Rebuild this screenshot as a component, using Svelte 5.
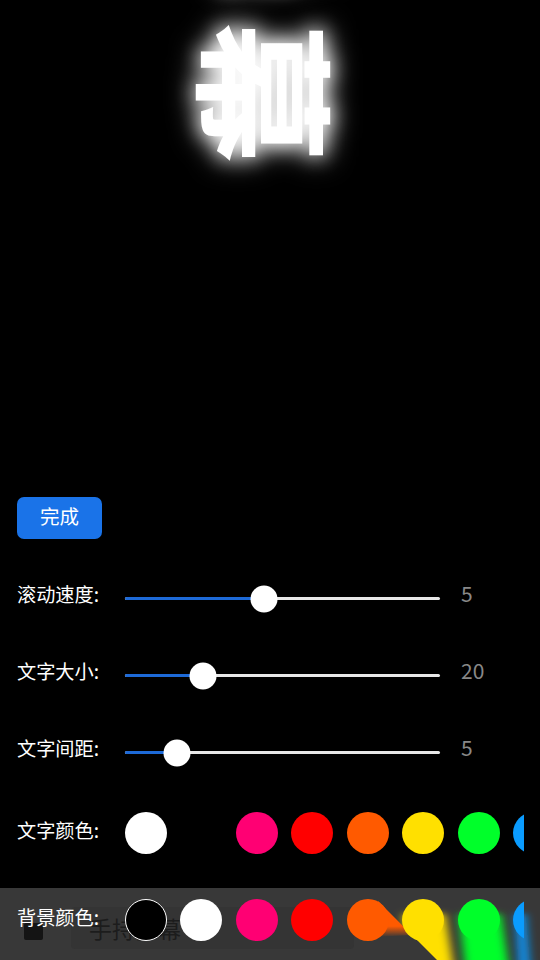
<script>
  const sliders = [
    { label: '滚动速度:', value: 5, thumb: 139 },
    { label: '文字大小:', value: 20, thumb: 78 },
    { label: '文字间距:', value: 5, thumb: 52 }
  ];

  const palette = ['#ff0073', '#ff0000', '#ff5a00', '#ffe000', '#00ff2a', '#0a9cff'];
  const textColors = ['#ffffff', '#000000', ...palette];
  const bgColors = ['#000000', '#ffffff', ...palette];

  let textColor = $state('#ffffff');
  let bgColor = $state('#000000');
</script>

<div class="page" style="background: {bgColor};">
  <div class="stage">
    <div class="banner" style="color: {textColor};">手持弹幕</div>
  </div>

  <div class="input-bar">
    <div class="bar-icon"></div>
    <div class="bar-input">手持弹幕</div>
  </div>

  <svg class="smear" width="540" height="72" viewBox="0 888 540 72">
    <defs>
      <filter id="soft" x="-60%" y="-50%" width="220%" height="200%">
        <feGaussianBlur stdDeviation="5 3" />
      </filter>
      <linearGradient id="wedge" x1="0" y1="0" x2="0" y2="1">
        <stop offset="0.7" stop-color="#ff5a00" />
        <stop offset="1" stop-color="#ff5a00" stop-opacity="0" />
      </linearGradient>
      <clipPath id="cut">
        <polygon points="385,895 540,895 540,960 437,960 385,908" />
      </clipPath>
    </defs>
    <polygon points="378,901 412,935 372,937" fill="url(#wedge)" />
    <g clip-path="url(#cut)">
      <polygon points="403,914 445,914 455,975 411,975" fill="#ffe000" filter="url(#soft)" />
      <polygon points="459,914 501,914 510,975 466,975" fill="#00ff2a" filter="url(#soft)" />
      <polygon points="515,914 526,914 531,975 519,975" fill="#0a8fe8" filter="url(#soft)" />
    </g>
  </svg>

  <div class="panel">
    <button class="done">完成</button>

    {#each sliders as s}
      <div class="row">
        <span class="label">{s.label}</span>
        <div class="slider">
          <div class="fill" style="width: {s.thumb}px;"></div>
          <div class="thumb" style="left: {s.thumb}px;"></div>
        </div>
        <span class="value">{s.value}</span>
      </div>
    {/each}

    <div class="row color-row">
      <span class="label">文字颜色:</span>
      <div class="swatches">
        {#each textColors as c}
          <button class="swatch" style="background: {c};" aria-label={c} onclick={() => (textColor = c)}></button>
        {/each}
      </div>
    </div>

    <div class="row color-row last">
      <span class="label">背景颜色:</span>
      <div class="swatches">
        {#each bgColors as c}
          <button
            class="swatch {c === bgColor ? 'active' : ''}"
            style="background: {c};"
            aria-label={c}
            onclick={() => (bgColor = c)}
          ></button>
        {/each}
      </div>
    </div>
  </div>
</div>

<style>
  :global(body) {
    margin: 0;
    background: #000;
  }

  .page {
    position: relative;
    width: 540px;
    height: 960px;
    overflow: hidden;
    display: flex;
    flex-direction: column;
    justify-content: flex-end;
    font-family: "Noto Sans CJK SC", "Noto Sans", sans-serif;
    color: #fff;
  }

  .stage {
    position: absolute;
    left: 1px;
    right: 0;
    top: 0;
    height: 196px;
    display: flex;
    justify-content: center;
    align-items: flex-end;
  }

  .banner {
    writing-mode: vertical-rl;
    text-orientation: sideways;
    white-space: nowrap;
    font-size: 142px;
    line-height: 1;
    font-weight: 700;
    letter-spacing: 32px;
    text-shadow: 0 0 30px #fff, 0 0 20px #fff;
  }

  .input-bar {
    position: absolute;
    left: 0;
    right: 0;
    bottom: 0;
    height: 72px;
    background: #383838;
    display: flex;
    align-items: center;
    gap: 28px;
    padding-left: 24px;
    box-sizing: border-box;
  }

  .bar-icon {
    width: 19px;
    height: 17px;
    margin-top: 14px;
    background: #141414;
    border-radius: 2px;
  }

  .bar-input {
    width: 265px;
    height: 42px;
    margin-top: 8px;
    padding-left: 18px;
    background: #343434;
    border-radius: 4px;
    color: #1c1c1c;
    font-size: 23px;
    line-height: 42px;
  }

  .smear {
    position: absolute;
    left: 0;
    bottom: 0;
  }

  .panel {
    position: relative;
    display: flex;
    flex-direction: column;
    padding: 0 16px 19px 17px;
  }

  .done {
    width: 85px;
    height: 42px;
    margin-bottom: 24px;
    padding: 0 0 5px;
    border: none;
    border-radius: 7px;
    background: #1a73e8;
    color: #fff;
    font-family: inherit;
    font-size: 19.5px;
  }

  .row {
    display: flex;
    align-items: center;
    height: 63px;
    margin-bottom: 14px;
  }

  .label {
    width: 108px;
    flex: none;
    font-size: 19.2px;
    line-height: 1;
  }

  .slider {
    position: relative;
    width: 315px;
    height: 3.5px;
    margin-top: 8px;
    background: #e8e8e8;
    border-radius: 2px;
  }

  .fill {
    height: 100%;
    background: #1d6ad8;
    border-radius: 2px;
  }

  .thumb {
    position: absolute;
    top: 50%;
    width: 27px;
    height: 27px;
    border-radius: 50%;
    background: #fff;
    transform: translate(-50%, -50%);
  }

  .value {
    margin-left: 21px;
    margin-top: -2px;
    color: #888;
    font-size: 21px;
    line-height: 1;
  }

  .color-row {
    height: 42px;
    margin-top: 18px;
    margin-bottom: 45px;
  }

  .color-row .label {
    margin-top: -4px;
  }

  .color-row.last {
    margin-top: 0;
    margin-bottom: 0;
  }

  .swatches {
    flex: 1;
    min-width: 0;
    display: flex;
    gap: 13.45px;
    overflow: hidden;
  }

  .swatch {
    flex: none;
    width: 42px;
    height: 42px;
    padding: 0;
    border: none;
    border-radius: 50%;
    box-sizing: border-box;
  }

  .swatch.active {
    border: 1px solid #fff;
  }
</style>
